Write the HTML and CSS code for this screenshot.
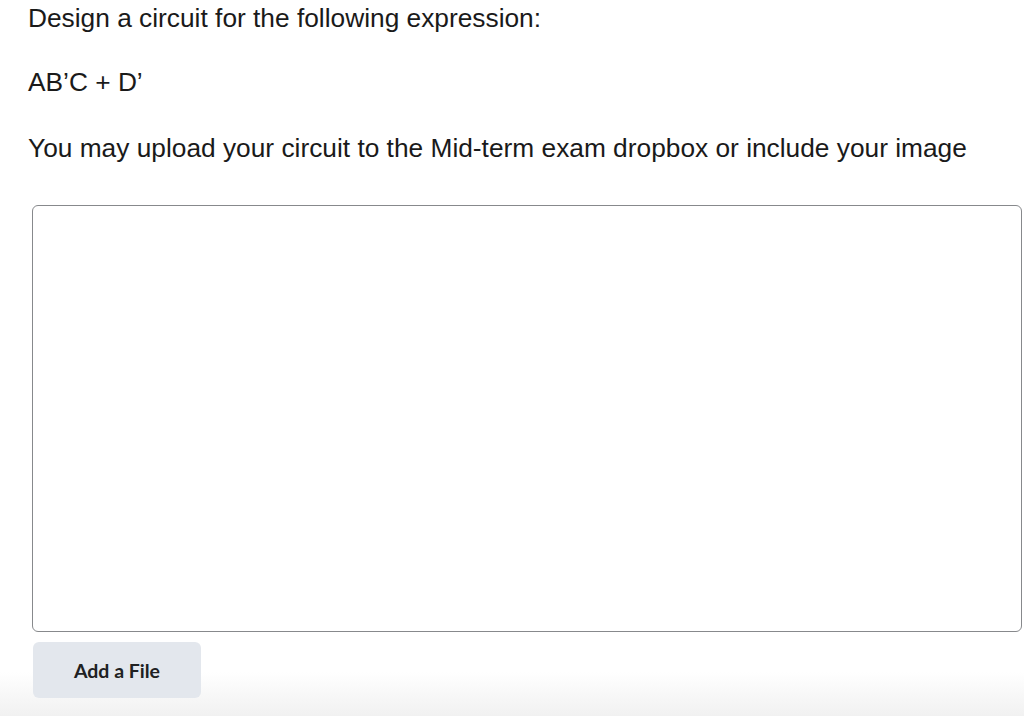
FILE: index.html
```html
<!DOCTYPE html>
<html lang="en">
<head>
<meta charset="utf-8">
<title>Question</title>
<link rel="stylesheet" href="styles.css">
</head>
<body>
<main class="question">
  <p class="line">Design a circuit for the following expression:</p>
  <p class="line">AB’C + D’</p>
  <p class="line">You may upload your circuit to the Mid-term exam dropbox or include your image</p>
  <div class="answer" contenteditable="true"></div>
  <button class="add-file" type="button">Add a File</button>
</main>
</body>
</html>
```

FILE: styles.css
```css
html, body {
  margin: 0;
  padding: 0;
}
body {
  width: 1024px;
  height: 716px;
  overflow: hidden;
  background: linear-gradient(to bottom, #ffffff 0, #ffffff 672px, #f1f1f1 716px);
  font-family: "Liberation Sans", Arial, sans-serif;
  color: #1a1a1a;
}
.question {
  display: flex;
  flex-direction: column;
  align-items: flex-start;
  padding: 3px 0 0 28px;
}
.line {
  margin: 0 0 34px 0;
  font-size: 26.3px;
  line-height: 30px;
  white-space: nowrap;
}
.line:nth-child(2) {
  margin-bottom: 36px;
}
.line:nth-child(3) {
  margin-bottom: 42px;
}
.answer {
  box-sizing: border-box;
  width: 990px;
  height: 427px;
  margin-left: 4px;
  border: 1.5px solid #87898c;
  border-radius: 6px;
  background: #fff;
}
.add-file {
  margin: 10px 0 0 5px;
  width: 168px;
  height: 56px;
  border: 0;
  border-radius: 6px;
  background: #e3e7ed;
  font-family: Lato, "Noto Sans", sans-serif;
  font-weight: 700;
  font-size: 19.5px;
  color: #202122;
}
```
